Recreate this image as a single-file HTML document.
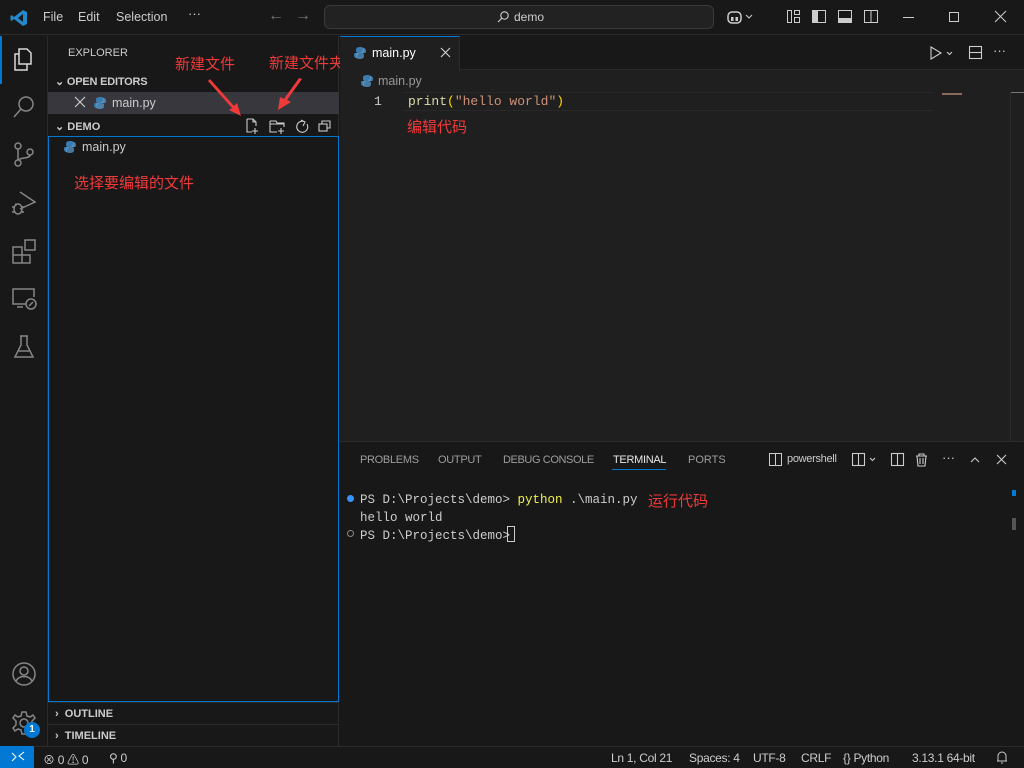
<!DOCTYPE html>
<html><head><meta charset="utf-8"><style>
*{margin:0;padding:0;box-sizing:border-box}
body{width:1024px;height:768px;background:#181818;font-family:"Liberation Sans","Noto Sans CJK SC",sans-serif;color:#ccc;font-size:13px;position:relative;overflow:hidden}
.a{position:absolute}
.t{position:absolute;white-space:nowrap}
.cn{font-family:"Liberation Sans","Noto Sans CJK SC",sans-serif;color:#f03a3a;font-size:15px}
.mono{font-family:"Liberation Mono","DejaVu Sans Mono",monospace}
svg{position:absolute;overflow:visible}
.py{position:absolute;width:12px;height:12px}
.sb{position:absolute;white-space:nowrap;top:751px;font-size:12px;color:#ccc;letter-spacing:-0.3px}
</style></head><body>
<div class="a" style="left:0;top:0;width:1024px;height:35px;background:#181818;border-bottom:1px solid #2b2b2b"></div>
<svg style="left:10px;top:9px" width="18" height="18" viewBox="0 0 18 18"><path d="M13 1 L17 3 V15 L13 17 L4 10 L1.5 12 L0.5 11 V7 L1.5 6 L4 8 Z M13 5 L8 9 L13 13 Z" fill="#2489ca"/></svg>
<div class="t" style="left:43px;top:10px;color:#ccc;font-size:12.5px">File</div>
<div class="t" style="left:78px;top:10px;color:#ccc;font-size:12.5px">Edit</div>
<div class="t" style="left:116px;top:10px;color:#ccc;font-size:12.5px">Selection</div>
<div class="t" style="left:188px;top:6px;color:#ccc">···</div>
<div class="t" style="left:268px;top:7px;color:#777;font-size:16px">←</div>
<div class="t" style="left:295px;top:7px;color:#777;font-size:16px">→</div>
<div class="a" style="left:324px;top:5px;width:390px;height:24px;background:#222;border:1px solid #3a3a3a;border-radius:6px"></div>
<svg style="left:497px;top:11px" width="12" height="12"><circle cx="7.5" cy="4.5" r="3.7" fill="none" stroke="#ccc" stroke-width="1.1"/><path d="M5 7 L1 11" stroke="#ccc" stroke-width="1.2"/></svg>
<div class="t" style="left:514px;top:10px;color:#ccc;font-size:12px">demo</div>
<svg style="left:727px;top:9px" width="28" height="16"><rect x="1" y="3" width="13" height="11" rx="4" fill="none" stroke="#ccc" stroke-width="1.5"/><rect x="4" y="8" width="2.5" height="4" fill="#ccc"/><rect x="8.5" y="8" width="2.5" height="4" fill="#ccc"/><path d="M19 6 L22 9 L25 6" stroke="#ccc" fill="none"/></svg>
<svg style="left:787px;top:10px" width="100" height="14"><rect x="0.5" y="0.5" width="4" height="12" fill="none" stroke="#ccc"/><rect x="7.5" y="0.5" width="5" height="4" fill="none" stroke="#ccc"/><rect x="7.5" y="7.5" width="5" height="5" fill="none" stroke="#ccc"/>
<rect x="25.5" y="0.5" width="13" height="12" fill="none" stroke="#ccc"/><rect x="26" y="1" width="5" height="11" fill="#ccc"/>
<rect x="51.5" y="0.5" width="13" height="12" fill="none" stroke="#ccc"/><rect x="52" y="8" width="12" height="4" fill="#ccc"/>
<rect x="77.5" y="0.5" width="13" height="12" fill="none" stroke="#ccc"/><path d="M84 1 V12" stroke="#ccc"/></svg>
<div class="a" style="left:903px;top:17px;width:11px;height:1px;background:#ccc"></div>
<div class="a" style="left:949px;top:12px;width:10px;height:10px;border:1px solid #ccc"></div>
<svg style="left:995px;top:11px" width="12" height="12"><path d="M0 0 L11 11 M11 0 L0 11" stroke="#ccc"/></svg>

<div class="a" style="left:0;top:36px;width:48px;height:710px;background:#181818;border-right:1px solid #2b2b2b"></div>
<div class="a" style="left:0;top:36px;width:2px;height:48px;background:#0078d4"></div>
<svg style="left:12px;top:46px" width="24" height="26" fill="none" stroke="#d7d7d7" stroke-width="1.5"><path d="M7 3 H15 L19 7 V18 H7 Z"/><path d="M7 8 H3 V24 H15 V18"/></svg>
<svg style="left:12px;top:95px" width="24" height="24" fill="none" stroke="#868686" stroke-width="1.5"><circle cx="14" cy="9" r="7"/><path d="M9 14 L2 22"/></svg>
<svg style="left:12px;top:142px" width="24" height="26" fill="none" stroke="#868686" stroke-width="1.5"><circle cx="6" cy="4" r="3"/><circle cx="6" cy="21" r="3"/><circle cx="18" cy="10" r="3"/><path d="M6 7 V18 M18 13 C18 17 8 15 7 18"/></svg>
<svg style="left:10px;top:190px" width="26" height="26" fill="none" stroke="#868686" stroke-width="1.5"><path d="M10 2 L25 12 L10 19"/><ellipse cx="8" cy="19" rx="4" ry="5"/><path d="M2 17 H5 M2 22 H5 M11 17 H14 M11 22 H14 M5 14 L7 15"/></svg>
<svg style="left:12px;top:239px" width="26" height="26" fill="none" stroke="#868686" stroke-width="1.5"><path d="M1 8 H10 V24 H1 Z M1 16 H18 V24 H10"/><rect x="13" y="1" width="10" height="10"/></svg>
<svg style="left:12px;top:287px" width="26" height="26" fill="none" stroke="#868686" stroke-width="1.5"><path d="M14 17 H1 V2 H22 V10"/><path d="M5 20 H11"/><circle cx="19" cy="17" r="5"/><path d="M17 19 L21 15"/></svg>
<svg style="left:13px;top:334px" width="22" height="26" fill="none" stroke="#868686" stroke-width="1.5"><path d="M7 2 H15 M8 2 V11 L2 23 H20 L14 11 V2 M5 17 H17"/></svg>
<svg style="left:11px;top:661px" width="26" height="26" fill="none" stroke="#868686" stroke-width="1.5"><circle cx="13" cy="13" r="11"/><circle cx="13" cy="10" r="4"/><path d="M5 20 C8 14 18 14 21 20"/></svg>
<svg style="left:11px;top:710px" width="26" height="26" fill="none" stroke="#868686" stroke-width="1.5"><circle cx="13" cy="13" r="4"/><path d="M11 2 H15 L16 6 L19 7 L22 5 L24 8 L21 11 V15 L24 18 L21 21 L18 19 L16 20 L15 24 H11 L10 20 L7 19 L4 21 L2 18 L5 15 V11 L2 8 L4 5 L7 7 L10 6 Z"/></svg>
<div class="a" style="left:24px;top:722px;width:16px;height:16px;border-radius:50%;background:#0078d4;color:#fff;font-size:10px;font-weight:bold;text-align:center;line-height:16px">1</div>

<div class="a" style="left:48px;top:36px;width:291px;height:710px;background:#181818;border-right:1px solid #2b2b2b"></div>
<div class="t" style="left:68px;top:47px;font-size:11px;color:#ccc">EXPLORER</div>
<div class="t" style="left:55px;top:75px;font-size:11px;font-weight:bold;color:#ccc;letter-spacing:-0.2px">⌄ OPEN EDITORS</div>
<div class="a" style="left:48px;top:92px;width:291px;height:22px;background:#37373d"></div>
<svg style="left:75px;top:97px" width="11" height="11"><path d="M0 0 L10 10 M10 0 L0 10" stroke="#ccc" stroke-width="1.2"/></svg>
<svg class="py" style="left:94px;top:97px" viewBox="0 0 12 12"><path d="M6 0 C2 0 2 2 2 3 V5 H7 V6 H1 C0 6 0 8 0 8 C0 11 2 11 3 11 V9 C3 8 4 7 5 7 H8 C9 7 10 6 10 5 V2 C10 1 9 0 6 0Z" fill="#3c7bad"/><path d="M6 12 C10 12 10 10 10 9 V7 H5 V6 H11 C12 6 12 4 12 4 C12 1 10 1 9 1 V3 C9 4 8 5 7 5 H4 C3 5 2 6 2 7 V10 C2 11 3 12 6 12Z" fill="#5a9fd4" opacity=".7"/></svg>
<div class="t" style="left:112px;top:96px;color:#ccc;font-size:12.5px">main.py</div>
<div class="t" style="left:55px;top:120px;font-size:11px;font-weight:bold;color:#ccc">⌄ DEMO</div>
<svg style="left:246px;top:118px" width="90" height="16" fill="none" stroke="#ccc" stroke-width="1.1"><path d="M1 1 H7 L10 4 V8 M6 14 H1 V1 M7 1 V4 H10 M9 10 V16 M6 13 H12"/><path d="M24 3 H30 L31 5 H38 V9 M31 14 H24 V3 M24 6 H38 M35 10 V16 M32 13 H38"/><path d="M59 4 A5.5 5.5 0 1 0 61 6 M55 2 L59 4 L57 8"/><rect x="73" y="6" width="8" height="7"/><path d="M76 6 V3 H84 V10 H81"/></svg>
<div class="a" style="left:48px;top:136px;width:291px;height:566px;border:1px solid #0078d4"></div>
<svg class="py" style="left:64px;top:141px" viewBox="0 0 12 12"><path d="M6 0 C2 0 2 2 2 3 V5 H7 V6 H1 C0 6 0 8 0 8 C0 11 2 11 3 11 V9 C3 8 4 7 5 7 H8 C9 7 10 6 10 5 V2 C10 1 9 0 6 0Z" fill="#3c7bad"/><path d="M6 12 C10 12 10 10 10 9 V7 H5 V6 H11 C12 6 12 4 12 4 C12 1 10 1 9 1 V3 C9 4 8 5 7 5 H4 C3 5 2 6 2 7 V10 C2 11 3 12 6 12Z" fill="#5a9fd4" opacity=".7"/></svg>
<div class="t" style="left:82px;top:140px;color:#ccc;font-size:12.5px">main.py</div>
<div class="t cn" style="left:74px;top:172px">选择要编辑的文件</div>
<div class="t cn" style="left:175px;top:53px">新建文件</div>
<div class="t cn" style="left:269px;top:52px">新建文件夹</div>
<svg style="left:200px;top:70px" width="110" height="50"><path d="M10 9 L34 36 L37 33 L41 46 L29 40 L32 38 L8 11 Z" fill="#f03a3a"/><path d="M102 9 L87 30 L91 32 L78 40 L80 27 L84 29 L99 8 Z" fill="#f03a3a"/></svg>
<div class="a" style="left:48px;top:702px;width:291px;height:1px;background:#2b2b2b"></div>
<div class="t" style="left:55px;top:708px;font-size:11px;font-weight:bold;color:#ccc">›&nbsp; OUTLINE</div>
<div class="a" style="left:48px;top:724px;width:291px;height:1px;background:#2b2b2b"></div>
<div class="t" style="left:55px;top:730px;font-size:11px;font-weight:bold;color:#ccc">›&nbsp; TIMELINE</div>

<div class="a" style="left:340px;top:36px;width:684px;height:405px;background:#1f1f1f"></div>
<div class="a" style="left:340px;top:36px;width:684px;height:34px;background:#181818;border-bottom:1px solid #2b2b2b"></div>
<div class="a" style="left:340px;top:36px;width:120px;height:35px;background:#1f1f1f;border-top:1px solid #0078d4;border-right:1px solid #2b2b2b"></div>
<svg class="py" style="left:354px;top:47px" viewBox="0 0 12 12"><path d="M6 0 C2 0 2 2 2 3 V5 H7 V6 H1 C0 6 0 8 0 8 C0 11 2 11 3 11 V9 C3 8 4 7 5 7 H8 C9 7 10 6 10 5 V2 C10 1 9 0 6 0Z" fill="#3c7bad"/><path d="M6 12 C10 12 10 10 10 9 V7 H5 V6 H11 C12 6 12 4 12 4 C12 1 10 1 9 1 V3 C9 4 8 5 7 5 H4 C3 5 2 6 2 7 V10 C2 11 3 12 6 12Z" fill="#5a9fd4" opacity=".7"/></svg>
<div class="t" style="left:372px;top:46px;color:#fff;font-size:12.5px">main.py</div>
<svg style="left:441px;top:48px" width="10" height="10"><path d="M0 0 L9 9 M9 0 L0 9" stroke="#ccc" stroke-width="1.2"/></svg>
<svg style="left:930px;top:46px" width="60" height="14" fill="none" stroke="#ccc" stroke-width="1.1"><path d="M1 1 L11 7 L1 13 Z"/><path d="M17 6 L19.5 8.5 L22 6"/><rect x="39.5" y="0.5" width="12" height="12"/><path d="M40 6.5 H51"/></svg>
<div class="t" style="left:993px;top:43px;color:#ccc">···</div>
<svg class="py" style="left:361px;top:75px" viewBox="0 0 12 12"><path d="M6 0 C2 0 2 2 2 3 V5 H7 V6 H1 C0 6 0 8 0 8 C0 11 2 11 3 11 V9 C3 8 4 7 5 7 H8 C9 7 10 6 10 5 V2 C10 1 9 0 6 0Z" fill="#3c7bad"/><path d="M6 12 C10 12 10 10 10 9 V7 H5 V6 H11 C12 6 12 4 12 4 C12 1 10 1 9 1 V3 C9 4 8 5 7 5 H4 C3 5 2 6 2 7 V10 C2 11 3 12 6 12Z" fill="#5a9fd4" opacity=".7"/></svg>
<div class="t" style="left:378px;top:74px;color:#999;font-size:12.5px">main.py</div>
<div class="a" style="left:403px;top:92px;width:530px;height:19px;border-top:1px solid #282828;border-bottom:1px solid #282828"></div>
<div class="t mono" style="left:374px;top:94px;color:#ccc;font-size:13px">1</div>
<div class="t mono" style="left:408px;top:94px;font-size:13px"><span style="color:#dcdcaa">print</span><span style="color:#ffd700">(</span><span style="color:#ce9178">"hello world"</span><span style="color:#ffd700">)</span></div>
<div class="a" style="left:942px;top:93px;width:20px;height:2px;background:#8a6a5a"></div>
<div class="a" style="left:1010px;top:92px;width:14px;height:1px;background:#777"></div>
<div class="a" style="left:1010px;top:92px;width:1px;height:349px;background:#2b2b2b"></div>
<div class="t cn" style="left:407px;top:116px">编辑代码</div>

<div class="a" style="left:340px;top:441px;width:684px;height:305px;background:#181818;border-top:1px solid #2b2b2b"></div>
<div class="t" style="left:360px;top:454px;font-size:11px;color:#9d9d9d;letter-spacing:-0.3px">PROBLEMS</div>
<div class="t" style="left:438px;top:454px;font-size:11px;color:#9d9d9d;letter-spacing:-0.3px">OUTPUT</div>
<div class="t" style="left:503px;top:454px;font-size:11px;color:#9d9d9d;letter-spacing:-0.4px">DEBUG CONSOLE</div>
<div class="t" style="left:613px;top:454px;font-size:11px;color:#e7e7e7;letter-spacing:-0.3px">TERMINAL</div>
<div class="a" style="left:612px;top:469px;width:54px;height:1px;background:#0078d4"></div>
<div class="t" style="left:688px;top:454px;font-size:11px;color:#9d9d9d">PORTS</div>
<svg style="left:769px;top:453px" width="14" height="14"><rect x="0.5" y="0.5" width="12" height="12" fill="none" stroke="#ccc"/><path d="M6.5 1 V12" stroke="#ccc"/></svg>
<div class="t" style="left:787px;top:453px;font-size:11px;color:#ccc;letter-spacing:-0.3px">powershell</div>
<svg style="left:852px;top:453px" width="170" height="14" fill="none" stroke="#ccc" stroke-width="1.1"><rect x="0.5" y="0.5" width="12" height="12"/><path d="M6.5 1 V12 M18 5 L20.5 7.5 L23 5"/><rect x="39.5" y="0.5" width="12" height="12"/><path d="M45.5 1 V12"/><path d="M64 3 H75 M67 3 V1 H72 V3 M65 3 L66 13 H73 L74 3 M68 5 V11 M71 5 V11"/><path d="M119 9 L123 5 L127 9 M145 2 L154 11 M154 2 L145 11"/></svg>
<div class="t" style="left:942px;top:450px;color:#ccc">···</div>
<div class="a" style="left:347px;top:495px;width:7px;height:7px;border-radius:50%;background:#3794ff"></div>
<div class="a" style="left:347px;top:530px;width:7px;height:7px;border-radius:50%;border:1px solid #888"></div>
<div class="t mono" style="left:360px;top:491px;font-size:12.5px;color:#ccc;line-height:18px">PS D:\Projects\demo&gt; <span style="color:#f1f14c">python</span> .\main.py<br>hello world<br>PS D:\Projects\demo&gt; </div>
<div class="a" style="left:507px;top:526px;width:8px;height:16px;border:1px solid #ccc"></div>
<div class="t cn" style="left:648px;top:490px">运行代码</div>
<div class="a" style="left:1012px;top:490px;width:4px;height:6px;background:#0078d4"></div>
<div class="a" style="left:1012px;top:518px;width:4px;height:12px;background:#555"></div>

<div class="a" style="left:0;top:746px;width:1024px;height:22px;background:#181818;border-top:1px solid #2b2b2b"></div>
<div class="a" style="left:0;top:746px;width:34px;height:22px;background:#0078d4"></div>
<svg style="left:11px;top:751px" width="14" height="12"><path d="M1 10 L5 6 L1 2 M13 1 L8 5 L13 9" stroke="#fff" fill="none" stroke-width="1.1"/></svg>
<div class="sb" style="left:43px">⊗ 0 ⚠ 0</div>
<div class="sb" style="left:109px">⚲ 0</div>
<div class="sb" style="left:611px">Ln 1, Col 21</div>
<div class="sb" style="left:689px">Spaces: 4</div>
<div class="sb" style="left:753px">UTF-8</div>
<div class="sb" style="left:801px">CRLF</div>
<div class="sb" style="left:843px">{} Python</div>
<div class="sb" style="left:912px">3.13.1 64-bit</div>
<svg style="left:996px;top:751px" width="12" height="13"><path d="M2 10 V5 A4 4 0 0 1 10 5 V10 H1 H11 M5 12 H7" stroke="#ccc" fill="none"/></svg>
</body></html>
